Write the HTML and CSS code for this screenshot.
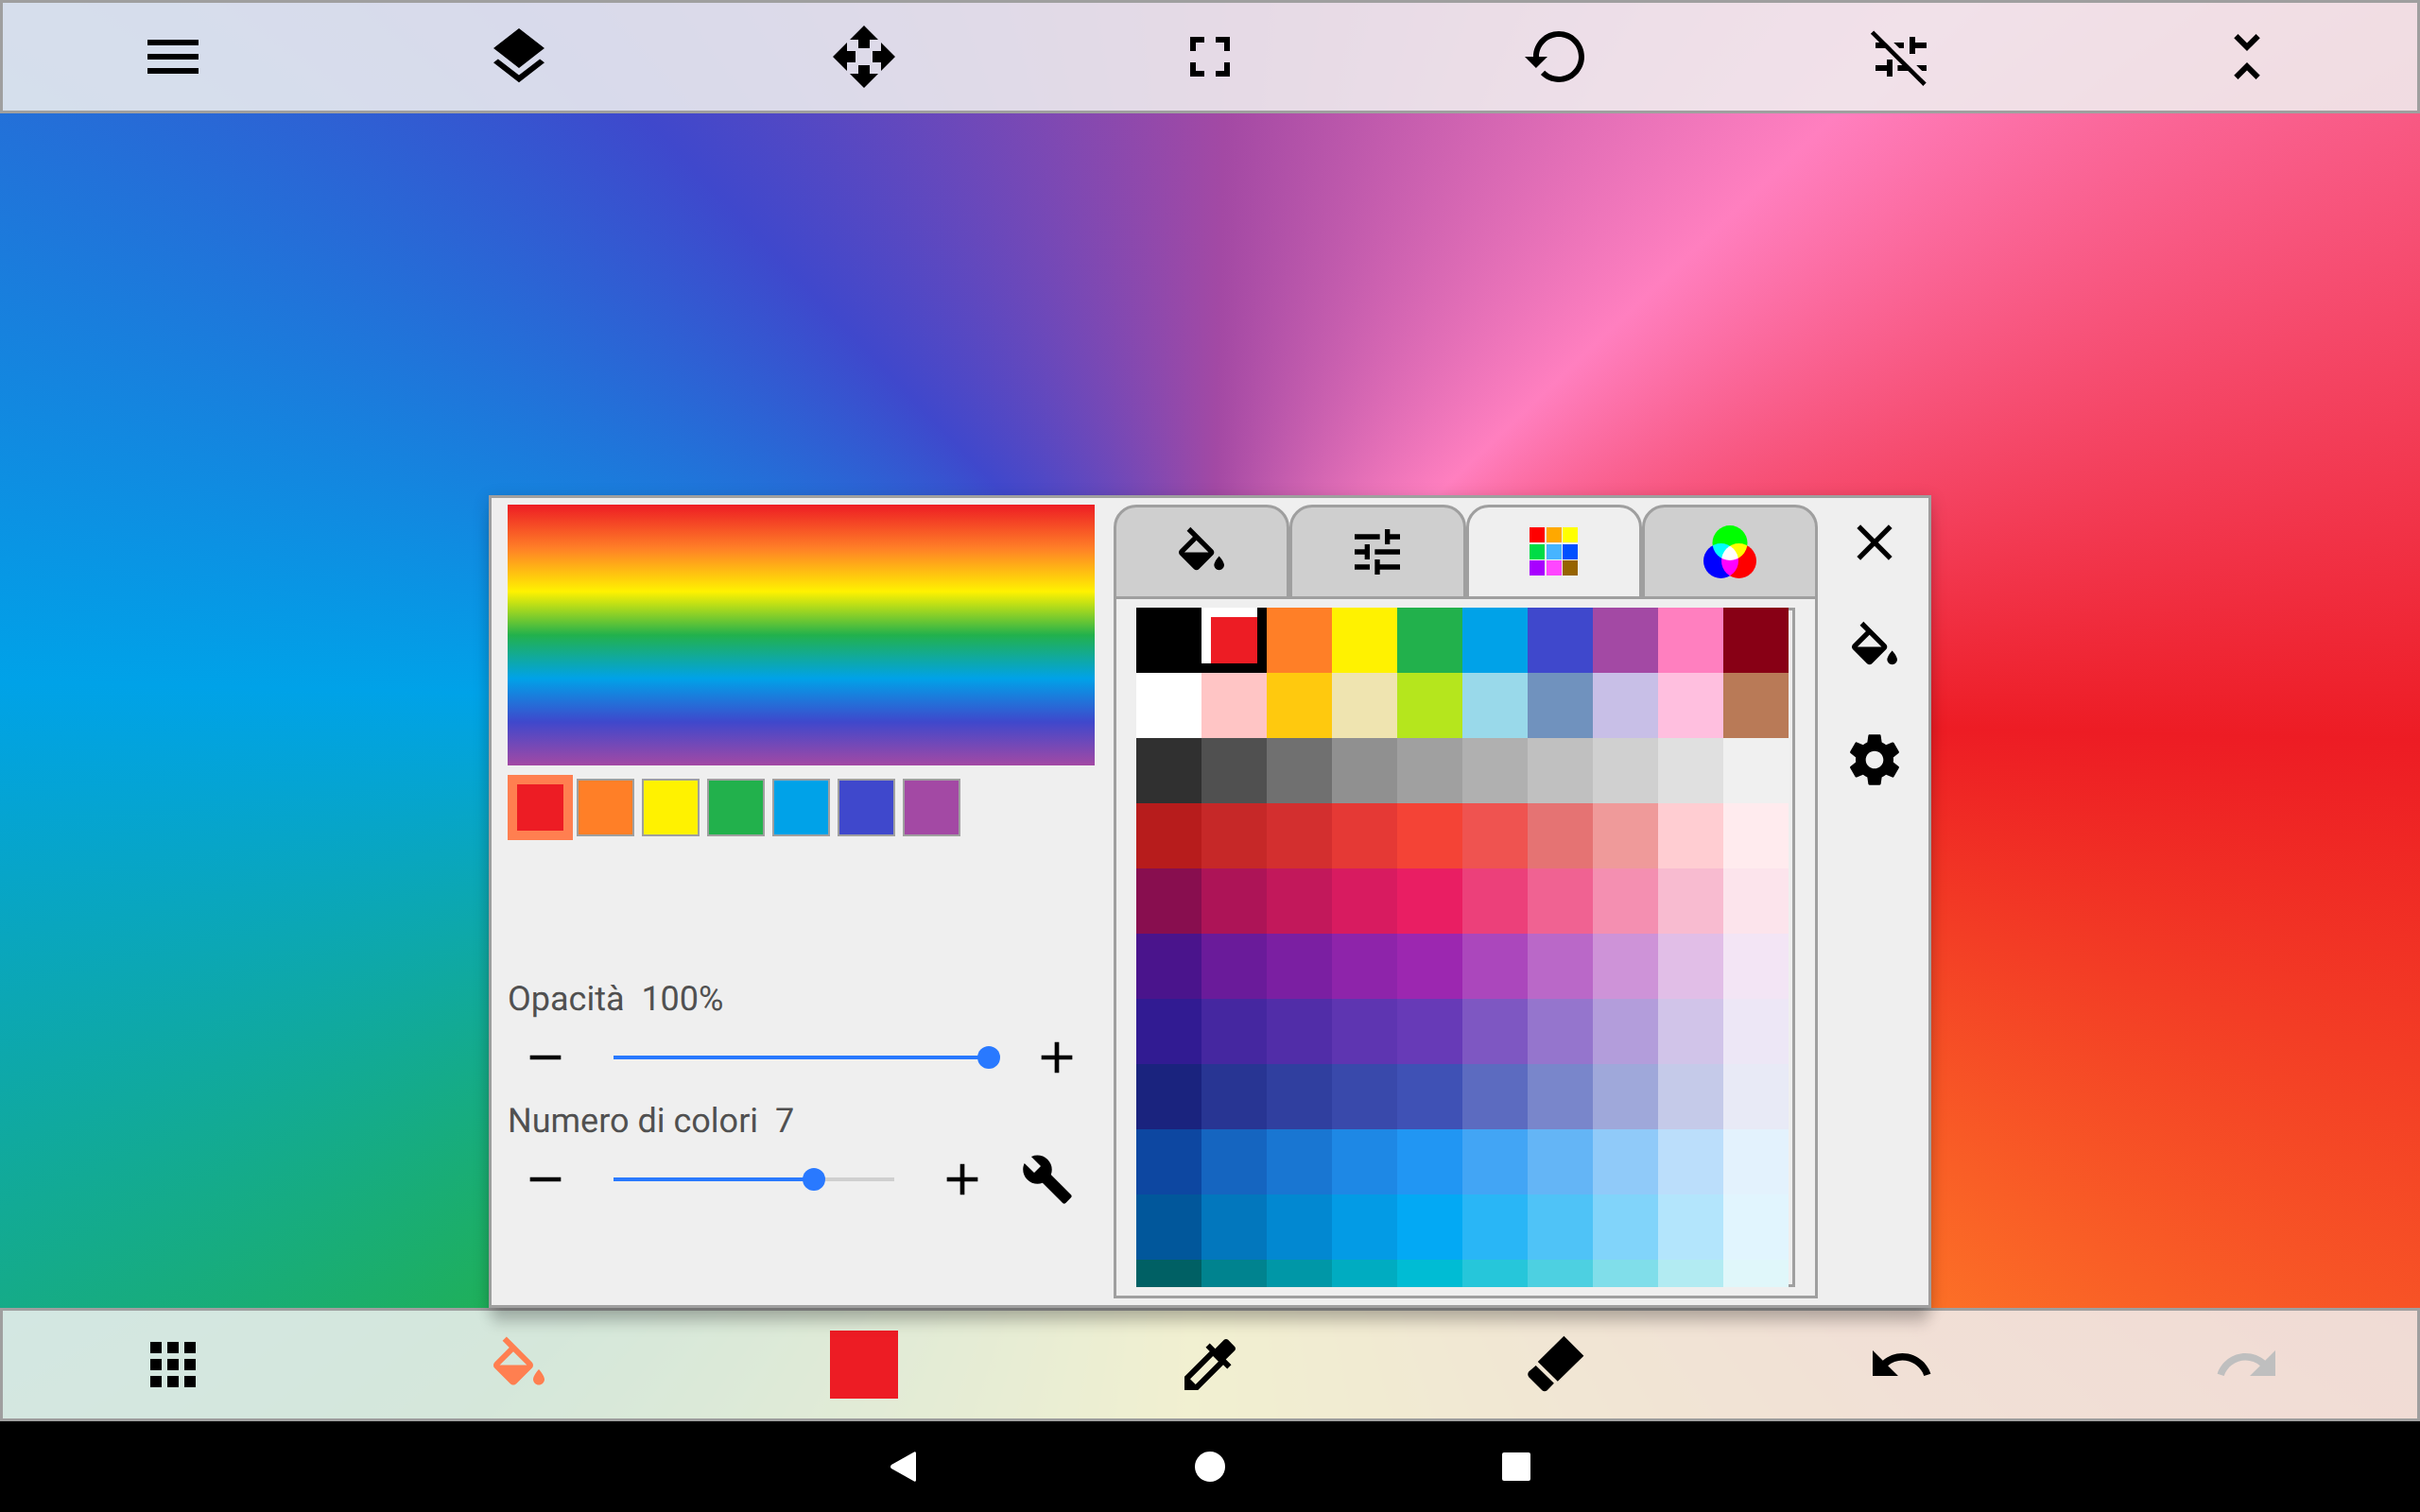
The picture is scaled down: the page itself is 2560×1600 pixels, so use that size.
FILE: index.html
```html
<!DOCTYPE html>
<html lang="it">
<head>
<meta charset="utf-8">
<title>Disegno</title>
<link rel="stylesheet" href="styles.css">
</head>
<body>
<svg class="defs" aria-hidden="true">
  <symbol id="bucket" viewBox="0 0 24 24"><path transform="translate(0 2.2)" d="M16.56 8.94L7.62 0 6.21 1.41l2.38 2.38-5.15 5.15c-.59.59-.59 1.54 0 2.12l5.5 5.5c.29.29.68.44 1.06.44s.77-.15 1.06-.44l5.5-5.5c.59-.58.59-1.53 0-2.12zM5.21 10L10 5.21 14.79 10H5.21zM19 11.5s-2 2.17-2 3.5c0 1.1.9 2 2 2s2-.9 2-2c0-1.33-2-3.5-2-3.5z"/></symbol>
  <symbol id="minus" viewBox="0 0 24 24"><path d="M5 11h14v2H5z"/></symbol>
  <symbol id="plus" viewBox="0 0 24 24"><path d="M19 13h-6v6h-2v-6H5v-2h6V5h2v6h6v2z"/></symbol>
</svg>
<main class="app">
  <header class="toolbar">
    <button aria-label="Menu"><svg class="icon" viewBox="0 0 24 24"><path d="M3 18h18v-2H3v2zm0-5h18v-2H3v2zm0-7v2h18V6H3z"/></svg></button>
    <button aria-label="Livelli"><svg class="icon" viewBox="0 0 24 24"><path d="M11.99 18.54l-7.37-5.73L3 14.07l9 7 9-7-1.63-1.27-7.38 5.74zM12 16l7.36-5.73L21 9l-9-7-9 7 1.63 1.27L12 16z"/></svg></button>
    <button aria-label="Sposta"><svg class="icon" viewBox="0 0 24 24"><path d="M10 9h4V6h3l-5-5-5 5h3v3zm-1 1H6V7l-5 5 5 5v-3h3v-4zm14 2l-5-5v3h-3v4h3v3l5-5zm-9 3h-4v3H7l5 5 5-5h-3v-3z"/></svg></button>
    <button aria-label="Adatta"><svg class="icon" viewBox="0 0 24 24"><path d="M7 14H5v5h5v-2H7v-3zm-2-4h2V7h3V5H5v5zm12 7h-3v2h5v-5h-2v3zM14 5v2h3v3h2V5h-5z"/></svg></button>
    <button aria-label="Ripristina rotazione"><svg class="icon" viewBox="0 0 24 24"><path d="M13 3c-4.97 0-9 4.03-9 9H1l3.89 3.89.07.14L9 12H6c0-3.87 3.13-7 7-7s7 3.13 7 7-3.13 7-7 7c-1.93 0-3.68-.79-4.94-2.06l-1.42 1.42C8.27 19.99 10.51 21 13 21c4.97 0 9-4.03 9-9s-4.03-9-9-9z"/></svg></button>
    <button aria-label="Stabilizzatore spento"><svg class="icon" viewBox="0 0 24 24"><path d="M3 7h3.5l2 2H3zM9.400 7H13v2h-1.600zM15 5h2v2h4v2h-4v2h-2zM3 15h4v-2h2v6H7v-2H3zM10.800 15h3l2 2h-5zM17.400 15H21v2h-1.600z"/><path d="M1.300 3.900L2.400 2.800 20.900 21.200 19.800 22.300z"/></svg></button>
    <button aria-label="Comprimi"><svg class="icon" viewBox="0 0 24 24"><path d="M7.41 18.59L8.83 20 12 16.83 15.17 20l1.41-1.41L12 14l-4.59 4.59zm9.18-13.18L15.170 4 12 7.170 8.830 4 7.410 5.410 12 10l4.590-4.590z"/></svg></button>
  </header>

  <section class="stage">
    <div class="panel">
      <div class="gradient">
        <div class="preview"></div>
        <div class="stops">
          <button class="stop selected" style="--c:#ed1c24" aria-label="Colore 1"></button>
          <button class="stop" style="--c:#ff7f27" aria-label="Colore 2"></button>
          <button class="stop" style="--c:#fff200" aria-label="Colore 3"></button>
          <button class="stop" style="--c:#22b14c" aria-label="Colore 4"></button>
          <button class="stop" style="--c:#00a2e8" aria-label="Colore 5"></button>
          <button class="stop" style="--c:#3f48cc" aria-label="Colore 6"></button>
          <button class="stop" style="--c:#a349a4" aria-label="Colore 7"></button>
        </div>
        <div class="controls">
          <label class="caption" for="opacity">Opacità&nbsp; 100%</label>
          <div class="row">
            <button class="step" aria-label="Diminuisci opacità"><svg class="icon"><use href="#minus"/></svg></button>
            <input class="slider" id="opacity" type="range" min="0" max="100" value="100" style="--p:100%">
            <button class="step" aria-label="Aumenta opacità"><svg class="icon"><use href="#plus"/></svg></button>
          </div>
          <label class="caption" for="count">Numero di colori&nbsp; 7</label>
          <div class="row">
            <button class="step" aria-label="Meno colori"><svg class="icon"><use href="#minus"/></svg></button>
            <input class="slider" id="count" type="range" min="2" max="9" value="7" style="--p:71%">
            <button class="step" aria-label="Più colori"><svg class="icon"><use href="#plus"/></svg></button>
            <button class="step tool" aria-label="Strumenti"><svg class="icon" viewBox="0 0 24 24"><path d="M22.7 19l-9.1-9.1c.9-2.3.4-5-1.5-6.900-2-2-5-2.400-7.400-1.300L9 6 6 9 1.600 4.700C.4 7.100.9 10.100 2.900 12.100c1.900 1.900 4.600 2.400 6.900 1.500l9.100 9.100c.4.4 1 .4 1.400 0l2.300-2.300c.5-.4.5-1.100.1-1.400z"/></svg></button>
          </div>
        </div>
      </div>

      <div class="picker">
        <div class="tabs" role="tablist">
          <button class="tab" role="tab" aria-label="Riempimento"><svg class="icon"><use href="#bucket"/></svg></button>
          <button class="tab" role="tab" aria-label="Regolazioni"><svg class="icon" viewBox="0 0 24 24"><path d="M3 17v2h6v-2H3zM3 5v2h10V5H3zm10 16v-2h8v-2h-8v-2h-2v6h2zM7 9v2H3v2h4v2h2V9H7zm14 4v-2H11v2h10zm-6-4h2V7h4V5h-4V3h-2v6z"/></svg></button>
          <button class="tab active" role="tab" aria-selected="true" aria-label="Tavolozza"><svg class="icon" viewBox="0 0 64 64"><path fill="#f00" d="M6 6h16v16H6z"/><path fill="#ffa800" d="M24 6h16v16H24z"/><path fill="#ff0" d="M41 6h16v16H41z"/><path fill="#00dc46" d="M6 24h16v16H6z"/><path fill="#46b4ff" d="M24 24h16v16H24z"/><path fill="#0050ff" d="M41 24h16v16H41z"/><path fill="#a800ff" d="M6 41h16v16H6z"/><path fill="#ff46ff" d="M24 41h16v16H24z"/><path fill="#966400" d="M41 41h16v16H41z"/></svg></button>
          <button class="tab" role="tab" aria-label="RGB"><svg class="icon rgb" viewBox="0 0 64 64"><circle cx="32" cy="22.500" r="18.500" fill="#0f0"/><circle cx="22.500" cy="41.500" r="18.500" fill="#00f"/><circle cx="41.500" cy="41.500" r="18.500" fill="#f00"/></svg></button>
        </div>
        <div class="sheet">
          <div class="palette" id="palette"></div>
          <div class="edge"></div>
        </div>
      </div>

      <div class="side">
        <button aria-label="Chiudi"><svg class="icon" viewBox="0 0 24 24"><path d="M19 6.410L17.590 5 12 10.590 6.410 5 5 6.410 10.590 12 5 17.590 6.410 19 12 13.410 17.590 19 19 17.590 13.410 12z"/></svg></button>
        <button aria-label="Riempi"><svg class="icon"><use href="#bucket"/></svg></button>
        <button class="settings" aria-label="Impostazioni"><svg class="icon" viewBox="0 0 24 24"><path d="M19.430 12.980c.04-.32.07-.64.07-.98s-.03-.66-.07-.98l2.110-1.650c.19-.15.24-.42.12-.64l-2-3.460c-.12-.22-.39-.3-.61-.22l-2.490 1c-.52-.4-1.080-.73-1.690-.98l-.38-2.650C14.460 2.180 14.250 2 14 2h-4c-.25 0-.46.18-.49.42l-.38 2.650c-.61.25-1.170.59-1.690.98l-2.490-1c-.23-.09-.49 0-.61.22l-2 3.460c-.13.22-.07.49.12.64l2.110 1.650c-.04.32-.07.65-.07.98s.03.66.07.98l-2.110 1.650c-.19.15-.24.42-.12.64l2 3.460c.12.22.39.3.61.22l2.490-1c.52.4 1.080.73 1.690.98l.38 2.650c.03.24.24.42.49.42h4c.25 0 .46-.18.49-.42l.38-2.650c.61-.25 1.170-.59 1.690-.98l2.490 1c.23.09.49 0 .61-.22l2-3.460c.12-.22.07-.49-.12-.64l-2.110-1.650zM12 15.500c-1.930 0-3.500-1.570-3.500-3.500s1.570-3.500 3.500-3.500 3.500 1.570 3.500 3.500-1.570 3.500-3.500 3.500z"/></svg></button>
      </div>
    </div>
  </section>

  <footer class="toolbar">
    <button aria-label="Strumenti"><svg class="icon" viewBox="0 0 24 24"><path d="M4 8h4V4H4v4zm6 12h4v-4h-4v4zm-6 0h4v-4H4v4zm0-6h4v-4H4v4zm6 0h4v-4h-4v4zm6-10v4h4V4h-4zm-6 4h4V4h-4v4zm6 6h4v-4h-4v4zm0 6h4v-4h-4v4z"/></svg></button>
    <button class="accent" aria-label="Riempimento"><svg class="icon"><use href="#bucket"/></svg></button>
    <button aria-label="Colore corrente"><span class="current"></span></button>
    <button aria-label="Contagocce"><svg class="icon" viewBox="0 0 24 24"><path d="M20.710 5.630l-2.340-2.340c-.39-.39-1.020-.39-1.410 0l-3.120 3.120-1.930-1.910-1.410 1.410 1.420 1.420L3 16.250V21h4.750l8.920-8.920 1.420 1.420 1.410-1.410-1.920-1.920 3.120-3.120c.4-.4.4-1.030.01-1.420zM6.920 19L5 17.080l8.060-8.060 1.920 1.920L6.920 19z"/></svg></button>
    <button aria-label="Gomma"><svg class="icon" viewBox="0 0 24 24"><path d="M14.800 1.900l7 7-9.200 9-7-6.900zM4.900 12.300l6.400 6.300-2.400 2.500q-.9.700-1.800 0l-4.600-4.600q-.8-1-.1-2z"/></svg></button>
    <button aria-label="Annulla"><svg class="icon" viewBox="0 0 24 24"><path d="M12.500 8c-2.650 0-5.050.99-6.900 2.600L2 7v9h9l-3.620-3.620c1.390-1.160 3.160-1.880 5.120-1.880 3.540 0 6.550 2.310 7.600 5.500l2.370-.78C21.080 11.030 17.150 8 12.500 8z"/></svg></button>
    <button aria-label="Ripeti" disabled><svg class="icon" viewBox="0 0 24 24"><path d="M18.400 10.600C16.550 8.990 14.150 8 11.500 8c-4.650 0-8.580 3.030-9.960 7.220L3.900 16c1.050-3.190 4.050-5.500 7.600-5.500 1.950 0 3.730.72 5.120 1.880L13 16h9V7l-3.600 3.600z"/></svg></button>
  </footer>
</main>
<nav class="system">
  <button aria-label="Indietro"><svg viewBox="-1 0 32 32"><path d="M28 1.500v29a1.500 1.500 0 0 1-2 1L2 18a2.500 2.500 0 0 1 0-4L26 .5a1.500 1.500 0 0 1 2 1z"/></svg></button>
  <button aria-label="Home"><svg viewBox="0 0 32 32"><circle cx="16" cy="16" r="16"/></svg></button>
  <button aria-label="Recenti"><svg viewBox="0 0 32 32"><rect x="1" y="1" width="30" height="30" rx="2"/></svg></button>
</nav>
<script src="palette.js"></script>
</body>
</html>
```
FILE: palette.js
```js
const rows = [
  "000000 ed1c24 ff7f27 fff200 22b14c 00a2e8 3f48cc a349a4 ff7fbf 880015",
  "ffffff ffc5c5 ffc90e efe4b0 b5e61d 99d9ea 7092be c8bfe7 ffbfdf b97a57",
  "303030 505050 707070 909090 a0a0a0 b0b0b0 c0c0c0 d0d0d0 e0e0e0 f0f0f0",
  "b71c1c c62828 d32f2f e53935 f44336 ef5350 e57373 ef9a9a ffcdd2 ffebee",
  "880e4f ad1457 c2185b d81b60 e91e63 ec407a f06292 f48fb1 f8bbd0 fce4ec",
  "4a148c 6a1b9a 7b1fa2 8e24aa 9c27b0 ab47bc ba68c8 ce93d8 e1bee7 f3e5f5",
  "311b92 4527a0 512da8 5e35b1 673ab7 7e57c2 9575cd b39ddb d1c4e9 ede7f6",
  "1a237e 283593 303f9f 3949ab 3f51b5 5c6bc0 7986cb 9fa8da c5cae9 e8eaf6",
  "0d47a1 1565c0 1976d2 1e88e5 2196f3 42a5f5 64b5f6 90caf9 bbdefb e3f2fd",
  "01579b 0277bd 0288d1 039be5 03a9f4 29b6f6 4fc3f7 81d4fa b3e5fc e1f5fe",
  "006064 00838f 0097a7 00acc1 00bcd4 26c6da 4dd0e1 80deea b2ebf2 e0f7fa"
];
const palette = document.getElementById("palette");
rows.join(" ").split(" ").forEach((hex, i) => {
  const cell = document.createElement("button");
  cell.className = i === 1 ? "cell chosen" : "cell";
  cell.style.background = "#" + hex;
  cell.setAttribute("aria-label", "#" + hex);
  palette.append(cell);
});
```
FILE: styles.css
```css
* { box-sizing: border-box; }

body {
  margin: 0;
  height: 100vh;
  display: flex;
  flex-direction: column;
  background: #000;
  font-family: Roboto, sans-serif;
  text-rendering: geometricPrecision;
  overflow: hidden;
}

button {
  display: flex;
  align-items: center;
  justify-content: center;
  padding: 0;
  border: 0;
  background: none;
  color: #000;
}

.defs { position: absolute; width: 0; height: 0; }

.icon {
  display: block;
  width: 64px;
  height: 64px;
  fill: currentColor;
}

.app {
  flex: 1;
  min-height: 0;
  display: flex;
  flex-direction: column;
  background: conic-gradient(from 1.4deg, #a349a4, #ff7fbf, #ed1c24, #ff7f27, #fff200, #22b14c, #00a2e8, #3f48cc, #a349a4);
}

.toolbar {
  display: grid;
  grid-template-columns: repeat(7, 1fr);
  height: 120px;
  flex: none;
  box-shadow: inset 0 0 0 3px #9f9f9f;
  background: rgba(239, 239, 239, 0.875);
}
.toolbar .icon { width: 72px; height: 72px; }
.toolbar .accent { color: #ff7f50; }
.toolbar button:disabled { color: #bfbfbf; }
.current { width: 72px; height: 72px; background: #ed1c24; }

.stage {
  flex: 1;
  min-height: 0;
  display: flex;
  justify-content: center;
  align-items: flex-end;
}

.panel {
  display: flex;
  width: 1526px;
  height: 860px;
  padding: 7px 0 7px 17px;
  border: 3px solid #9f9f9f;
  background: #efefef;
  position: relative;
  box-shadow: 0 20px 14px -4px rgba(0, 0, 0, 0.17), 0 4px 16px rgba(0, 0, 0, 0.18);
}

.gradient {
  width: 621px;
  display: flex;
  flex-direction: column;
}
.preview {
  height: 276px;
  background: linear-gradient(#ed1c24, #ff7f27, #fff200, #22b14c, #00a2e8, #3f48cc, #a349a4);
}
.stops { display: flex; padding-top: 10px; }
.stop {
  width: 61px;
  height: 61px;
  margin: 4px;
  border: 2px solid #9f9f9f;
  background: var(--c);
}
.stop.selected {
  width: 69px;
  height: 69px;
  margin: 0;
  border: 10px solid #ff7f50;
}

.controls { margin-top: auto; padding-bottom: 86px; }
.caption {
  display: block;
  height: 49px;
  line-height: 55px;
  font-size: 36px;
  color: #505050;
}
.row { display: flex; height: 80px; }
.step { width: 80px; flex: none; }
.step .icon { width: 56px; height: 56px; }
.tool { width: 100px; }

.slider {
  flex: 1;
  min-width: 0;
  height: 80px;
  margin: 0;
  padding: 0 20px;
  appearance: none;
  background: none;
}
.slider::-webkit-slider-runnable-track {
  height: 24px;
  background: linear-gradient(90deg, #2979ff var(--p), #cfcfcf var(--p)) center / calc(100% - 24px) 4px no-repeat;
}
.slider::-webkit-slider-thumb {
  appearance: none;
  width: 24px;
  height: 24px;
  border-radius: 50%;
  background: #2979ff;
}

.picker {
  width: 745px;
  margin-left: 20px;
  display: flex;
  flex-direction: column;
}
.tabs {
  display: grid;
  grid-template-columns: repeat(4, 1fr);
  height: 100px;
}
.tab {
  border: 3px solid #9f9f9f;
  border-radius: 24px 24px 0 0;
  background: #cfcfcf;
}
.tab.active { background: #efefef; }
.rgb { isolation: isolate; }
.rgb circle { mix-blend-mode: screen; }
.sheet {
  flex: 1;
  min-height: 0;
  display: flex;
  padding: 9px 21px;
  border: 3px solid #9f9f9f;
  border-top: 0;
}
.palette {
  display: grid;
  grid-template-columns: repeat(10, 69px);
  grid-auto-rows: 69px;
  overflow: hidden;
}
.chosen { box-shadow: inset -10px -10px 0 #000, inset 10px 10px 0 #fff; }
.edge {
  width: 7px;
  border: 3px solid #9f9f9f;
  border-left: 0;
}

.side {
  flex: 1;
  display: flex;
  flex-direction: column;
  align-items: center;
  gap: 30px;
  padding-left: 2px;
}
.side button { width: 100px; height: 80px; }
.side .settings { height: 100px; }

.system {
  flex: none;
  height: 96px;
  display: flex;
  align-items: center;
  justify-content: center;
  gap: 292px;
}
.system svg { width: 32px; height: 32px; fill: #fff; }
```
